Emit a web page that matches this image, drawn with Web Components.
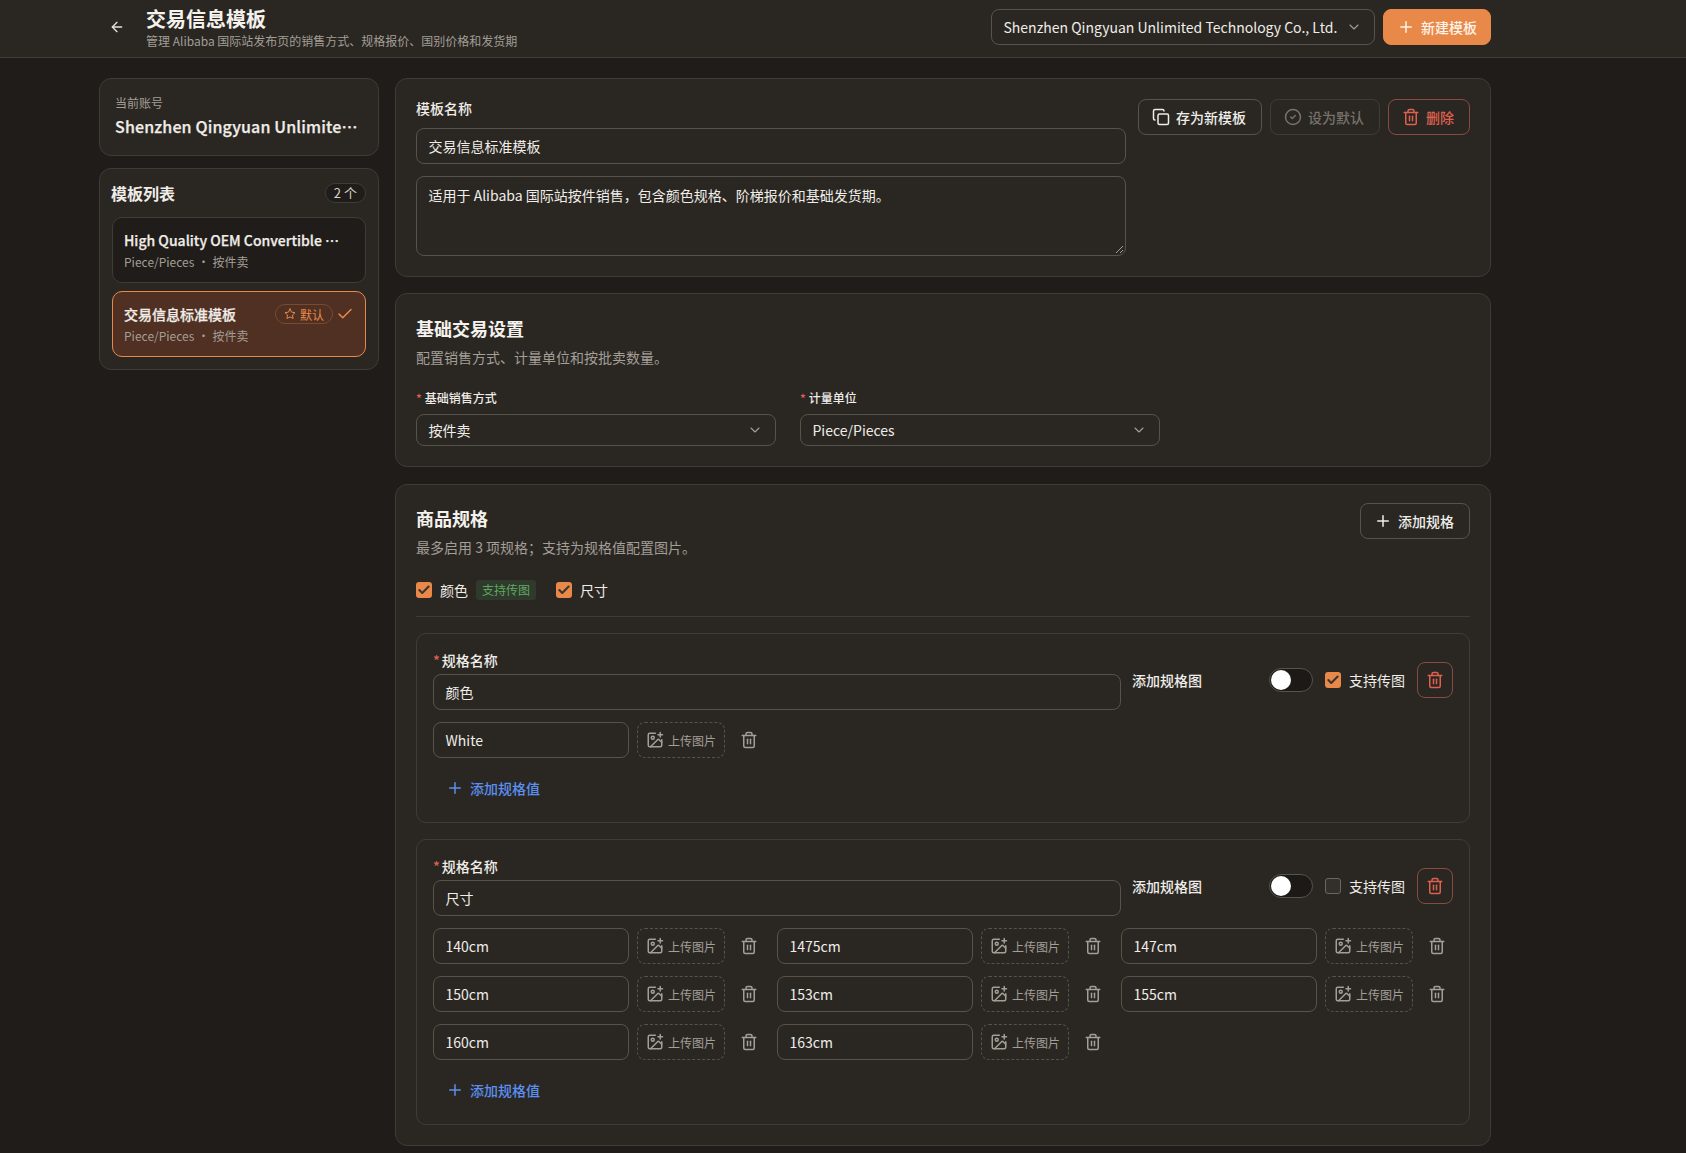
<!DOCTYPE html>
<html lang="zh">
<head>
<meta charset="utf-8">
<title>交易信息模板</title>
<style>
  html, body { margin: 0; height: 100%; overflow: hidden; background: #1f1c19; }
  body { font-family: "Noto Sans CJK SC", "Noto Sans", sans-serif; font-size: 14px; color: #f0ede8; }
</style>
</head>
<body>
<trade-app>
  <top-bar slot="top"></top-bar>

  <template-sidebar slot="side"></template-sidebar>

  <panel-card slot="main" class="first">
    <template-meta></template-meta>
  </panel-card>

  <panel-card slot="main" class="second">
    <section-head title="基础交易设置" desc="配置销售方式、计量单位和按批卖数量。"></section-head>
    <basic-settings></basic-settings>
  </panel-card>

  <panel-card slot="main" class="third">
    <section-head title="商品规格" desc="最多启用 3 项规格；支持为规格值配置图片。">
      <ui-button slot="action" icon="plus">添加规格</ui-button>
    </section-head>
    <spec-toggles></spec-toggles>
    <spec-card name="颜色" checked>
      <spec-value value="White"></spec-value>
    </spec-card>
    <spec-card name="尺寸">
      <spec-value value="140cm"></spec-value>
      <spec-value value="1475cm"></spec-value>
      <spec-value value="147cm"></spec-value>
      <spec-value value="150cm"></spec-value>
      <spec-value value="153cm"></spec-value>
      <spec-value value="155cm"></spec-value>
      <spec-value value="160cm"></spec-value>
      <spec-value value="163cm"></spec-value>
    </spec-card>
  </panel-card>
</trade-app>

<script>
const ICONS = {
  "arrow-left": '<path d="m12 19-7-7 7-7"/><path d="M19 12H5"/>',
  plus: '<path d="M5 12h14"/><path d="M12 5v14"/>',
  chevron: '<path d="m6 9 6 6 6-6"/>',
  copy: '<rect x="8" y="8" width="14" height="14" rx="2"/><path d="M4 16c-1.1 0-2-.9-2-2V4c0-1.1.9-2 2-2h10c1.1 0 2 .9 2 2"/>',
  "circle-check": '<circle cx="12" cy="12" r="10"/><path d="m9 12 2 2 4-4"/>',
  trash: '<path d="M3 6h18"/><path d="M19 6v14c0 1-1 2-2 2H7c-1 0-2-1-2-2V6"/><path d="M8 6V4c0-1 1-2 2-2h4c1 0 2 1 2 2v2"/><path d="M10 11v6"/><path d="M14 11v6"/>',
  "image-plus": '<path d="M16 5h6"/><path d="M19 2v6"/><path d="M21 11.5V19a2 2 0 0 1-2 2H5a2 2 0 0 1-2-2V5a2 2 0 0 1 2-2h7.5"/><path d="m21 15-3.086-3.086a2 2 0 0 0-2.828 0L6 21"/><circle cx="9" cy="9" r="2"/>',
  star: '<polygon points="12 2 15.09 8.26 22 9.27 17 14.14 18.18 21.02 12 17.77 5.82 21.02 7 14.14 2 9.27 8.91 8.26 12 2"/>',
  check: '<path d="M20 6 9 17l-5-5"/>'
};

/* small helper so each class only has to say what goes in its shadow root */
class Base extends HTMLElement {
  constructor() {
    super();
    this.attachShadow({mode: "open"});
  }
  connectedCallback() {
    this.shadowRoot.innerHTML = this.render();
  }
}

class UiIcon extends Base {
  render() {
    const size = this.getAttribute("size") || 16;
    return `<style>
      :host { display: inline-flex; flex: none; width: ${size}px; height: ${size}px; }
      svg { width: 100%; height: 100%; fill: none; stroke: currentColor; stroke-width: ${this.getAttribute("stroke") || 2};
        stroke-linecap: round; stroke-linejoin: round; }
    </style><svg viewBox="0 0 24 24">${ICONS[this.getAttribute("name")]}</svg>`;
  }
}

class UiButton extends Base {
  render() {
    const kind = this.getAttribute("kind") || "plain";
    return `<style>
      :host { display: inline-flex; flex: none; }
      .btn { display: flex; align-items: center; gap: 6px; height: 36px; box-sizing: border-box; padding: 0 15px 0 13px;
        border-radius: 8px; border: 1px solid #57524b; color: #f0ede8; font-size: 14px; font-weight: 500; white-space: nowrap; }
      .btn.primary { background: #e8894a; border-color: #e8894a; color: #fff3e8; padding: 0 13px; }
      .btn.muted { border-color: #3f3b35; color: #77726a; }
      .btn.danger { border-color: #8a4a40; color: #e0604f; }
    </style><div class="btn ${kind}"><ui-icon name="${this.getAttribute("icon")}" size="18"></ui-icon><span><slot></slot></span></div>`;
  }
}

class TextBox extends Base {
  render() {
    return `<style>
      :host { display: block; }
      .box { position: relative; box-sizing: border-box; height: ${this.getAttribute("height") || 36}px; padding: 0 12px 0 11.5px;
        display: flex; align-items: center; border: 1px solid #57524b; border-radius: 8px; color: #f0ede8; font-size: 14px; }
      .box.area { align-items: flex-start; padding-top: 8px; line-height: 20px; }
      .grip { position: absolute; right: 1px; bottom: 1px; width: 9px; height: 9px; stroke: #a39e96; fill: none; }
      ui-icon { margin-left: auto; color: #a39e96; }
    </style><div class="box ${this.hasAttribute("area") ? "area" : ""}"><span><slot></slot></span>
      ${this.hasAttribute("select") ? '<ui-icon name="chevron" size="16" stroke="1.6"></ui-icon>' : ""}
      ${this.hasAttribute("area") ? '<svg class="grip" viewBox="0 0 9 9"><path d="M1 8 8 1M5 8l3-3"/></svg>' : ""}
    </div>`;
  }
}

class UiCheck extends Base {
  render() {
    const on = this.hasAttribute("checked");
    return `<style>
      :host { display: inline-flex; align-items: center; gap: 8px; font-size: 14px; color: #f0ede8; white-space: nowrap; }
      .mark { width: 16px; height: 16px; box-sizing: border-box; border-radius: 3px; display: flex; align-items: center; justify-content: center; }
      .mark.on { background: #e8894a; color: #3a3530; }
      .mark.off { border: 1px solid #6b665e; background: #33302b; }
    </style><div class="mark ${on ? "on" : "off"}">${on ? '<ui-icon name="check" size="14" stroke="3.6"></ui-icon>' : ""}</div><span><slot></slot></span>`;
  }
}

class PanelCard extends Base {
  render() {
    return `<style>
      :host { display: block; box-sizing: border-box; padding: 20px; background: #2a2723;
        border: 1px solid #3f3b35; border-radius: 12px; }
      :host(.first) { padding-top: 18px; }
      :host(.second) { padding-top: 21px; }
      :host(.third) { margin-top: 1px; }
    </style><slot></slot>`;
  }
}

class SectionHead extends Base {
  render() {
    return `<style>
      :host { display: flex; justify-content: space-between; align-items: flex-start; }
      .title { font-size: 18px; font-weight: 700; line-height: 26px; color: #f5f2ed; }
      .desc { font-size: 14px; line-height: 20px; margin-top: 6px; color: #a39e96; }
      ::slotted(ui-button) { margin-top: -2px; }
    </style><div><div class="title">${this.getAttribute("title")}</div>
      <div class="desc">${this.getAttribute("desc")}</div></div><slot name="action"></slot>`;
  }
}

class TopBar extends Base {
  render() {
    return `<style>
      :host { display: block; box-sizing: border-box; height: 58px; background: #2a2723; border-bottom: 1px solid #3f3b35; }
      .inner { width: 1392px; margin-left: 99px; height: 100%; display: flex; align-items: center; }
      .back { margin-left: 10px; margin-right: 21px; margin-bottom: 4px; color: #e6e2dc; }
      .titles { flex: 1; margin-bottom: 1px; }
      h1 { margin: 0 0 2px; font-size: 20px; font-weight: 700; line-height: 24px; color: #f5f2ed; }
      p { margin: 0; font-size: 12px; line-height: 16px; color: #a39e96; }
      .right { display: flex; gap: 8px; margin-bottom: 4px; }
      .acct { width: 384px; }
    </style><div class="inner">
      <ui-icon class="back" name="arrow-left" size="16"></ui-icon>
      <div class="titles"><h1>交易信息模板</h1><p>管理 Alibaba 国际站发布页的销售方式、规格报价、国别价格和发货期</p></div>
      <div class="right">
        <text-box class="acct" select>Shenzhen Qingyuan Unlimited Technology Co., Ltd.</text-box>
        <ui-button kind="primary" icon="plus">新建模板</ui-button>
      </div>
    </div>`;
  }
}

class TemplateItem extends Base {
  render() {
    const active = this.hasAttribute("active");
    return `<style>
      :host { display: block; box-sizing: border-box; height: 66px; padding: 11px 11px 12px; border-radius: 10px;
        border: 1px solid ${active ? "#e8894a" : "#3f3b35"}; background: ${active ? "#4f3022" : "#1f1c19"}; }
      .row { display: flex; align-items: center; height: 22px; }
      .name { flex: 1; min-width: 0; white-space: nowrap; font-size: 14px; font-weight: 500; -webkit-text-stroke: .25px currentColor; color: #f0ede8; }
      .tag { display: flex; align-items: center; gap: 4px; height: 20px; box-sizing: border-box; padding: 0 8px; font-size: 12px;
        color: #e8894a; border: 1px solid #7a4a2c; border-radius: 10px; margin: 0 3px 0 6px; flex: none; }
      .ok { color: #e8894a; }
      .sub { display: flex; align-items: center; font-size: 12px; line-height: 18px; margin-top: 2px; color: #a39e96; }
      .sub i { font-style: normal; margin: 0 3px; }
    </style><div class="row"><div class="name">${this.getAttribute("name")}</div>
      ${active ? '<div class="tag"><ui-icon name="star" size="12"></ui-icon>默认</div><ui-icon class="ok" name="check" size="18"></ui-icon>' : ""}
    </div><div class="sub">Piece/Pieces<i>•</i>按件卖</div>`;
  }
}

class TemplateSidebar extends Base {
  render() {
    return `<style>
      :host { display: flex; flex-direction: column; gap: 12px; }
      .box { background: #2a2723; border: 1px solid #3f3b35; border-radius: 12px; box-sizing: border-box; }
      .acct { height: 78px; padding: 16px 15px; }
      .lbl { font-size: 12px; line-height: 16px; color: #a39e96; }
      .nm { font-size: 16px; font-weight: 500; -webkit-text-stroke: .25px currentColor; letter-spacing: .15px; line-height: 24px; margin-top: 3px; color: #f0ede8; white-space: nowrap; }
      .list { padding: 11px 12px 12px; display: flex; flex-direction: column; }
      .head { display: flex; justify-content: space-between; align-items: center; height: 26px; margin-bottom: 11px; }
      .head b { font-size: 16px; font-weight: 700; color: #f0ede8; margin-left: -1px; }
      .count { font-size: 13px; padding: 0 8px; height: 20px; line-height: 18px; box-sizing: border-box; border-radius: 10px;
        border: 1px solid #3f3b35; background: #1f1c19; color: #d5d1ca; }
      template-item + template-item { margin-top: 8px; }
    </style><div class="box acct"><div class="lbl">当前账号</div><div class="nm">Shenzhen Qingyuan Unlimite…</div></div>
    <div class="box list"><div class="head"><b>模板列表</b><span class="count">2 个</span></div>
      <template-item name="High Quality OEM Convertible …"></template-item>
      <template-item active name="交易信息标准模板"></template-item>
    </div>`;
  }
}

class TemplateMeta extends Base {
  render() {
    return `<style>
      :host { display: grid; grid-template-columns: 710px 1fr; column-gap: 12px; }
      label { display: block; font-size: 14px; font-weight: 500; line-height: 22px; margin-bottom: 9px; color: #f0ede8; }
      .area { margin-top: 12px; }
      .acts { display: flex; justify-content: flex-end; gap: 8px; margin-top: 2px; align-items: flex-start; }
    </style><div>
      <label>模板名称</label>
      <text-box>交易信息标准模板</text-box>
      <text-box class="area" area height="80">适用于 Alibaba 国际站按件销售，包含颜色规格、阶梯报价和基础发货期。</text-box>
    </div><div class="acts">
      <ui-button icon="copy">存为新模板</ui-button>
      <ui-button kind="muted" icon="circle-check">设为默认</ui-button>
      <ui-button kind="danger" icon="trash">删除</ui-button>
    </div>`;
  }
}

class BasicSettings extends Base {
  render() {
    return `<style>
      :host { display: grid; grid-template-columns: 360px 360px; column-gap: 24px; margin-top: 22px; }
      label { display: block; font-size: 12px; font-weight: 500; line-height: 18px; margin-bottom: 7px; color: #f0ede8; }
      i { color: #e0604f; font-style: normal; margin-right: 3px; }
    </style><div><label><i>*</i>基础销售方式</label><text-box select height="32">按件卖</text-box></div>
    <div><label><i>*</i>计量单位</label><text-box select height="32">Piece/Pieces</text-box></div>`;
  }
}

class SpecToggles extends Base {
  render() {
    return `<style>
      :host { display: flex; align-items: center; height: 20px; margin-top: 23px; padding-bottom: 16px; border-bottom: 1px solid #3f3b35; margin-bottom: 16px; }
      .tag { margin: 0 20px 0 8px; padding: 0 6px; height: 20px; line-height: 20px; font-size: 12px; color: #5fa860; background: #2f3a2d; border-radius: 3px; }
    </style><ui-check checked>颜色</ui-check><span class="tag">支持传图</span><ui-check checked>尺寸</ui-check>`;
  }
}

class SpecValue extends Base {
  render() {
    return `<style>
      :host { display: flex; align-items: center; gap: 8px; }
      text-box { width: 196px; }
      .up { display: flex; align-items: center; gap: 4px; width: 88px; height: 36px; box-sizing: border-box; padding-left: 8px;
        border: 1px dashed #57524b; border-radius: 8px; font-size: 12px; color: #a39e96; }
      .del { margin-left: 7px; color: #a39e96; }
    </style><text-box>${this.getAttribute("value")}</text-box>
      <div class="up"><ui-icon name="image-plus" size="18"></ui-icon>上传图片</div>
      <ui-icon class="del" name="trash" size="18"></ui-icon>`;
  }
}

class SpecCard extends Base {
  render() {
    const on = this.hasAttribute("checked");
    return `<style>
      :host { display: block; box-sizing: border-box; padding: 16px; margin-top: 16px; border: 1px solid #3f3b35; border-radius: 10px; }
      .top { display: flex; align-items: center; }
      .left { width: 688px; }
      label { display: block; font-size: 14px; font-weight: 500; line-height: 22px; margin-top: -1px; margin-bottom: 3px; color: #f0ede8; }
      i { color: #e0604f; font-style: normal; margin-right: 2px; }
      .ctl { flex: 1; margin-left: 11px; display: flex; align-items: center; }
      .txt { font-size: 14px; font-weight: 500; width: 137px; }
      .sw { width: 44px; height: 24px; box-sizing: border-box; border: 1px solid #57524b; border-radius: 12px; background: #1c1a17; padding: 1px; margin-right: 12px; }
      .sw::before { content: ""; display: block; width: 20px; height: 20px; border-radius: 50%; background: #fff; }
      .del { margin-left: auto; width: 36px; height: 36px; box-sizing: border-box; border: 1px solid #8a4a40; border-radius: 8px;
        display: flex; align-items: center; justify-content: center; color: #e0604f; }
      .vals { display: grid; grid-template-columns: repeat(3, 344px); row-gap: 12px; margin-top: 12px; width: 1032px; }
      .add { display: flex; align-items: center; gap: 6px; height: 36px; margin-top: 12px; padding-left: 13px; color: #5b8ff0; font-size: 14px; font-weight: 500; }
    </style><div class="top">
      <div class="left"><label><i>*</i>规格名称</label><text-box>${this.getAttribute("name")}</text-box></div>
      <div class="ctl">
        <span class="txt">添加规格图</span>
        <div class="sw"></div>
        <ui-check ${on ? "checked" : ""}>支持传图</ui-check>
        <div class="del"><ui-icon name="trash" size="18"></ui-icon></div>
      </div>
    </div>
    <div class="vals"><slot></slot></div>
    <div class="add"><ui-icon name="plus" size="18"></ui-icon>添加规格值</div>`;
  }
}

class TradeApp extends Base {
  render() {
    return `<style>
      :host { display: block; }
      .layout { display: grid; grid-template-columns: 280px 1096px; column-gap: 16px; margin: 20px 0 0 99px; width: 1392px; align-items: start; }
      .main { display: flex; flex-direction: column; gap: 16px; }
    </style><slot name="top"></slot>
    <div class="layout"><div><slot name="side"></slot></div><div class="main"><slot name="main"></slot></div></div>`;
  }
}

customElements.define("ui-icon", UiIcon);
customElements.define("ui-button", UiButton);
customElements.define("text-box", TextBox);
customElements.define("ui-check", UiCheck);
customElements.define("panel-card", PanelCard);
customElements.define("section-head", SectionHead);
customElements.define("top-bar", TopBar);
customElements.define("template-item", TemplateItem);
customElements.define("template-sidebar", TemplateSidebar);
customElements.define("template-meta", TemplateMeta);
customElements.define("basic-settings", BasicSettings);
customElements.define("spec-toggles", SpecToggles);
customElements.define("spec-value", SpecValue);
customElements.define("spec-card", SpecCard);
customElements.define("trade-app", TradeApp);
</script>
</body>
</html>
